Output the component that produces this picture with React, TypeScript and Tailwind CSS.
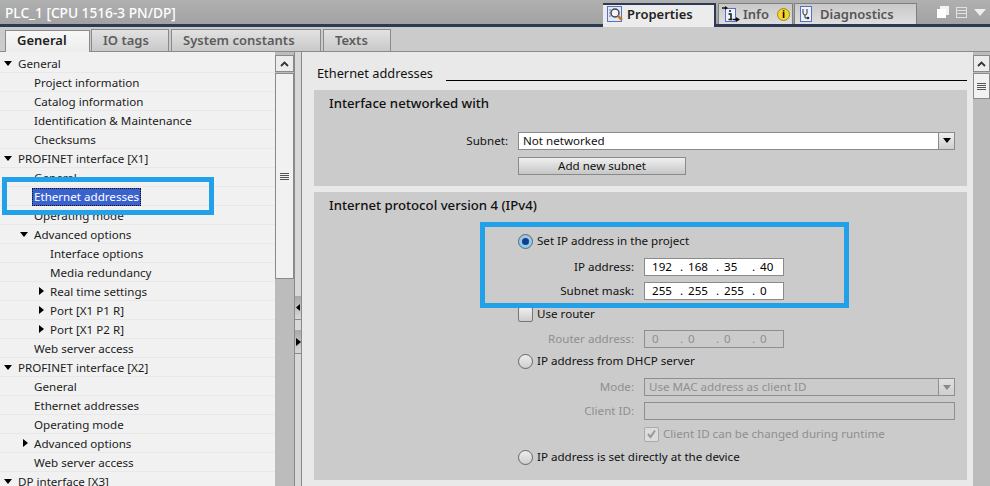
import React from 'react';

type TreeRow = { label: string; level: number; arrow?: 'down' | 'right'; selected?: boolean };

const treeRows: TreeRow[] = [
  { label: 'General', level: 0, arrow: 'down' },
  { label: 'Project information', level: 1 },
  { label: 'Catalog information', level: 1 },
  { label: 'Identification & Maintenance', level: 1 },
  { label: 'Checksums', level: 1 },
  { label: 'PROFINET interface [X1]', level: 0, arrow: 'down' },
  { label: 'General', level: 1 },
  { label: 'Ethernet addresses', level: 1, selected: true },
  { label: 'Operating mode', level: 1 },
  { label: 'Advanced options', level: 1, arrow: 'down' },
  { label: 'Interface options', level: 2 },
  { label: 'Media redundancy', level: 2 },
  { label: 'Real time settings', level: 2, arrow: 'right' },
  { label: 'Port [X1 P1 R]', level: 2, arrow: 'right' },
  { label: 'Port [X1 P2 R]', level: 2, arrow: 'right' },
  { label: 'Web server access', level: 1 },
  { label: 'PROFINET interface [X2]', level: 0, arrow: 'down' },
  { label: 'General', level: 1 },
  { label: 'Ethernet addresses', level: 1 },
  { label: 'Operating mode', level: 1 },
  { label: 'Advanced options', level: 1, arrow: 'right' },
  { label: 'Web server access', level: 1 },
  { label: 'DP interface [X3]', level: 0, arrow: 'down' },
];

const Arrow = ({ dir, className = '' }: { dir: 'down' | 'right' | 'left'; className?: string }) => {
  if (dir === 'down') return <svg width="8" height="5" viewBox="0 0 8 5" className={className}><path d="M0 0h8L4 5z" fill="currentColor" /></svg>;
  if (dir === 'right') return <svg width="5" height="8" viewBox="0 0 5 8" className={className}><path d="M0 0l5 4-5 4z" fill="currentColor" /></svg>;
  return <svg width="4" height="7" viewBox="0 0 4 7" className={className}><path d="M4 0L0 3.500l4 3.500z" fill="currentColor" /></svg>;
};

const Chevron = () => (
  <svg width="9" height="6" viewBox="0 0 9 6"><path d="M1 5l3.500-3.500L8 5" fill="none" stroke="#333" strokeWidth="1.800" /></svg>
);

const Grip = () => (
  <div className="flex w-[9px] flex-col gap-[1px]">
    <div className="h-px bg-[#555]" /><div className="h-px bg-[#555]" /><div className="h-px bg-[#555]" /><div className="h-px bg-[#555]" />
  </div>
);

const Radio = ({ checked }: { checked?: boolean }) => (
  <span className={`flex size-[15px] shrink-0 items-center justify-center rounded-full border border-[#666] ${checked ? 'bg-gradient-to-b from-[#9fc4e8] to-[#7fd0f4]' : 'bg-gradient-to-b from-[#ededed] to-[#cfcfcf]'}`}>
    {checked && <span className="size-[7px] rounded-full bg-[#123f8c]" />}
  </span>
);

const IpField = ({ parts, disabled }: { parts: string[]; disabled?: boolean }) => (
  <div className={`flex h-[18px] w-[140px] items-center border pl-[7px] ${disabled ? 'border-[#8f8f8f] text-[#8f8f8f]' : 'border-[#8a8a8a] bg-white text-black'}`}>
    {parts.map((p, i) => (
      <span key={i} className="flex w-[36px] shrink-0">
        <span className="w-[28px] shrink-0">{p}</span>
        {i < 3 && <span>.</span>}
      </span>
    ))}
  </div>
);

const FieldRow = ({ label, disabled, className = '', children }: { label: string; disabled?: boolean; className?: string; children: React.ReactNode }) => (
  <div className={`flex items-center ${className}`}>
    <span className={`w-[330px] pr-[10px] text-right ${disabled ? 'text-[#8f8f8f]' : 'text-[#111]'}`}>{label}</span>
    {children}
  </div>
);

const RadioRow = ({ label, checked, className = '' }: { label: string; checked?: boolean; className?: string }) => (
  <div className={`flex h-[16px] items-center gap-[4px] pl-[204px] text-[#111] ${className}`}>
    <Radio checked={checked} />
    <span>{label}</span>
  </div>
);

const tabClass = 'flex h-[22px] items-center border border-b-0 border-[#8a8a8a] bg-gradient-to-b from-[#e2e2e2] to-[#c9c9c9] pl-[11px] text-[13px] font-semibold text-[#5c5c5c]';

export default function App() {
  return (
    <div className="relative h-[486px] w-[990px] overflow-hidden bg-[#cbcbcb] text-[11.6px] leading-none [font-family:'Noto_Sans',sans-serif]">
      {/* title bar */}
      <div className="flex h-[27px] items-start justify-between border-b-[3px] border-[#2d3a55] bg-gradient-to-b from-[#b0b0b0] to-[#a2a2a2]">
        <span className="mt-[6px] pl-[5px] text-[13.7px] font-medium text-white">PLC_1 [CPU 1516-3 PN/DP]</span>
        <div className="flex items-start">
          <div className="relative z-10 mt-[3px] flex h-[24px] w-[113px] items-center gap-[3px] border-t-2 border-r-2 border-[#2d3a55] bg-[#ececec] pb-[4px] pl-[3px] text-[13px] font-semibold text-[#222]">
            <svg width="18" height="18" viewBox="0 0 18 18"><rect x="1.500" y="1.500" width="14" height="15" fill="#dfe8f8" stroke="#5a6fc0" /><circle cx="9" cy="8" r="4" fill="#f5f5f5" stroke="#444" strokeWidth="1.500" /><path d="M12 11l4 4" stroke="#c87a20" strokeWidth="2.500" /><path d="M3 5h2M3 8h2M3 11h2" stroke="#6a7ab0" /></svg>
            Properties
          </div>
          <div className="mt-[3px] ml-[2px] flex h-[21px] w-[75px] items-center gap-[3px] border border-b-0 border-[#808080] bg-gradient-to-b from-[#c9c9c9] to-[#dedede] pl-[3px] text-[13px] font-semibold text-[#555]">
            <svg width="18" height="18" viewBox="0 0 18 18"><rect x="3.500" y="3.500" width="10" height="13" fill="#eef2fb" stroke="#5a6fc0" /><path d="M0 3h4" stroke="#111" strokeWidth="1.500" /><path d="M3 1l3 2-3 2z" fill="#111" /><path d="M8 5v2M6.500 9H9v5M6.500 14.500h4" stroke="#111" strokeWidth="1.500" fill="none" /><path d="M11 14.500h5" stroke="#111" strokeWidth="1.500" /><path d="M14 12l4 2.500-4 2.500z" fill="#111" /></svg>
            Info
            <span className="ml-[5px] flex size-[13px] items-center justify-center rounded-full border border-[#a8860c] bg-[#f5d62a] text-[10px] font-bold text-black">i</span>
          </div>
          <div className="mt-[3px] ml-[1px] flex h-[21px] w-[123px] items-center gap-[8px] border border-b-0 border-[#808080] bg-gradient-to-b from-[#c9c9c9] to-[#dedede] pl-[5px] text-[13px] font-semibold text-[#555]">
            <svg width="12" height="16" viewBox="0 0 12 16"><rect x="0.500" y="0.500" width="11" height="15" fill="#eef2fb" stroke="#5a6fc0" /><path d="M3 3v4a2 2 0 0 0 4 0V3M5 9v3h2" stroke="#333" fill="none" /><circle cx="8" cy="12" r="1.300" fill="#333" /></svg>
            Diagnostics
          </div>
          <div className="mt-[6px] ml-[20px] flex items-center gap-[7px] pr-[4px]">
            <svg width="12" height="12" viewBox="0 0 12 12"><path d="M3 0h9v9H9V3H3z" fill="#fff" opacity=".85" /><rect y="3" width="9" height="9" fill="#fff" /></svg>
            <svg width="11" height="11" viewBox="0 0 11 11"><rect x="0.500" y="0.500" width="10" height="10" fill="none" stroke="#e2e2e2" /><path d="M0 3.500h11M0 6.500h11" stroke="#e2e2e2" /></svg>
            <svg width="12" height="7" viewBox="0 0 12 7"><path d="M0 0h12L6 7z" fill="#eee" /></svg>
          </div>
        </div>
      </div>

      {/* page tabs */}
      <div className="flex h-[25px] items-end gap-[1px] border-b border-[#8a8a8a] pl-[5px]">
        <div className="z-10 -mb-px flex h-[22px] w-[85px] items-center border border-b-0 border-[#8a8a8a] bg-gradient-to-b from-[#f7f7f7] to-[#ededed] pb-[2px] pl-[11px] text-[13px] font-semibold text-[#222]">General</div>
        <div className={`${tabClass} w-[78px]`}>IO tags</div>
        <div className={`${tabClass} ml-[1px] w-[150px]`}>System constants</div>
        <div className={`${tabClass} ml-[1px] w-[68px]`}>Texts</div>
      </div>

      <div className="flex h-[434px]">
        {/* tree */}
        <div className="w-[275px] shrink-0 overflow-hidden bg-[#f1f1f1] pt-[2px] text-[#1c1c1c]">
          {treeRows.map((row, i) => (
            <div key={i} className="flex h-[19px] items-start border-b border-[#e8e8e8]">
              <span className={`flex h-[18px] shrink-0 items-center justify-end pr-[6px] ${row.level === 0 ? 'w-[18px]' : row.level === 1 ? 'w-[34px]' : 'w-[50px]'}`}>
                {row.arrow && <Arrow dir={row.arrow} className="text-black" />}
              </span>
              {row.selected ? (
                <span className="mt-[1px] -ml-[2px] h-[18px] border border-dotted border-[#111] bg-[#3a62cf] px-[1px] pt-[2px] text-white">{row.label}</span>
              ) : (
                <span className="mt-[4px]">{row.label}</span>
              )}
            </div>
          ))}
        </div>

        {/* tree scrollbar */}
        <div className="flex w-[19px] shrink-0 flex-col gap-[1px] bg-[#bcbcbc] pt-[3px]">
          <div className="flex h-[17px] items-center justify-center border border-[#8a8a8a] bg-[#ececec]"><Chevron /></div>
          <div className="flex h-[206px] items-center justify-center border border-[#8a8a8a] bg-[#f1f1f1]"><Grip /></div>
        </div>

        {/* splitter */}
        <div className="relative w-[8px] shrink-0 border-x border-[#8a8a8a] bg-[#d8d8d8]">
          <div className="absolute top-[244px] flex h-[24px] w-full items-center justify-center border-b border-[#8a8a8a] bg-gradient-to-b from-[#a8a8a8] to-[#d8d8d8]"><Arrow dir="left" className="text-black" /></div>
          <div className="absolute top-[278px] flex h-[24px] w-full items-center justify-center border-b border-[#8a8a8a] bg-gradient-to-b from-[#a8a8a8] to-[#d8d8d8]"><Arrow dir="right" className="text-black" /></div>
        </div>

        {/* detail panel */}
        <div className="flex min-w-0 flex-1 bg-[#e9e9e9]">
          <div className="w-[665px] shrink-0 pl-[12px] text-[#111]">
            <div className="flex h-[38px] items-start">
              <span className="mt-[15px] ml-[3px] w-[129px] shrink-0 text-[12.8px]">Ethernet addresses</span>
              <div className="mt-[28px] h-px flex-1 bg-black" />
            </div>

            <section className="h-[96px] bg-[#cbcbcb]">
              <h3 className="pt-[7px] pl-[15px] text-[13.2px] font-medium">Interface networked with</h3>
              <div className="mt-[22px] flex h-[17px] items-center">
                <span className="w-[194px] text-right">Subnet:</span>
                <div className="ml-[10px] flex h-[18px] w-[437px] items-center border border-[#8a8a8a] bg-white pl-[4px]">
                  Not networked
                  <span className="ml-auto flex h-full w-[16px] items-center justify-center border-l border-[#8a8a8a] bg-gradient-to-b from-[#f0f0f0] to-[#cfcfcf]"><Arrow dir="down" className="text-black" /></span>
                </div>
              </div>
              <div className="mt-[8px] ml-[204px] flex h-[18px] w-[168px] items-center justify-center border border-[#8a8a8a] bg-gradient-to-b from-[#f0f0f0] to-[#c6c6c6]">Add new subnet</div>
            </section>

            <section className="mt-[6px] h-[288px] bg-[#cbcbcb]">
              <h3 className="pt-[7px] pl-[15px] text-[13.2px] font-medium">Internet protocol version 4 (IPv4)</h3>
              <RadioRow label="Set IP address in the project" checked className="mt-[21px]" />
              <FieldRow label="IP address:" className="mt-[9px]"><IpField parts={['192', '168', '35', '40']} /></FieldRow>
              <FieldRow label="Subnet mask:" className="mt-[6px]"><IpField parts={['255', '255', '255', '0']} /></FieldRow>
              <div className="mt-[6px] flex h-[16px] items-center gap-[4px] pl-[204px]">
                <span className="size-[15px] shrink-0 rounded-[2px] border border-[#777] bg-gradient-to-b from-[#f0f0f0] to-[#cccccc]" />
                <span>Use router</span>
              </div>
              <FieldRow label="Router address:" disabled className="mt-[8px]"><IpField parts={['0', '0', '0', '0']} disabled /></FieldRow>
              <RadioRow label="IP address from DHCP server" className="mt-[5px]" />
              <FieldRow label="Mode:" disabled className="mt-[9px]">
                <div className="flex h-[18px] w-[311px] items-center border border-[#8f8f8f] pl-[4px] text-[#8f8f8f]">
                  Use MAC address as client ID
                  <span className="ml-auto flex h-full w-[16px] items-center justify-center border-l border-[#8f8f8f] bg-gradient-to-b from-[#e0e0e0] to-[#cfcfcf]"><Arrow dir="down" className="text-[#888]" /></span>
                </div>
              </FieldRow>
              <FieldRow label="Client ID:" disabled className="mt-[6px]"><div className="h-[18px] w-[311px] border border-[#8f8f8f]" /></FieldRow>
              <div className="mt-[6px] flex h-[16px] items-center gap-[4px] pl-[330px] text-[#8f8f8f]">
                <span className="flex size-[15px] shrink-0 items-center justify-center rounded-[2px] border border-[#aaa] bg-[#dcdcdc]">
                  <svg width="11" height="10" viewBox="0 0 11 10"><path d="M2 5l2.500 3L9 1.500" fill="none" stroke="#999" strokeWidth="2" /></svg>
                </span>
                <span>Client ID can be changed during runtime</span>
              </div>
              <RadioRow label="IP address is set directly at the device" className="mt-[7px]" />
            </section>
          </div>

          {/* detail scrollbar */}
          <div className="ml-[6px] flex w-[17px] shrink-0 flex-col gap-[1px] bg-[#bcbcbc] pt-[3px]">
            <div className="flex h-[17px] items-center justify-center border border-[#8a8a8a] bg-[#ececec]"><Chevron /></div>
            <div className="flex h-[26px] items-center justify-center border border-[#8a8a8a] bg-[#f1f1f1]"><Grip /></div>
          </div>
        </div>
      </div>

      {/* blue callouts drawn on top of the screenshot */}
      <div className="absolute top-[177px] left-[2px] h-[38px] w-[212px] border-[5px] border-[#22a0e8]" />
      <div className="absolute top-[222px] left-[480px] h-[86px] w-[369px] border-[5px] border-[#22a0e8]" />
    </div>
  );
}
